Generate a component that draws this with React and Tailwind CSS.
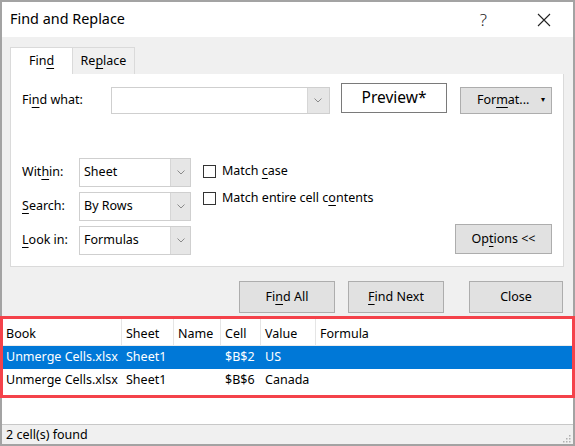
import React from 'react';

const U = ({ children }) => <span className="underline underline-offset-[3px] decoration-1">{children}</span>;

function Chevron() {
  return (
    <svg width="8" height="5" viewBox="0 0 8 5" className="text-[#8a8a8a]">
      <path d="M0.5 0.5 L4 4 L7.5 0.5" fill="none" stroke="currentColor" strokeWidth="1" />
    </svg>
  );
}

function Combo({ value, width, height, btn = 20 }) {
  return (
    <div className={`flex border border-[#cfcfcf] bg-white ${width} ${height}`}>
      <div className="flex-1 flex items-center pl-[4px] text-[12.5px]">{value}</div>
      <div className={`flex items-center justify-center bg-[#e6e6e6] border-l border-[#d6d6d6] ${btn === 22 ? 'w-[22px]' : 'w-[20px]'}`}>
        <Chevron />
      </div>
    </div>
  );
}

function Btn({ children, className = '' }) {
  return (
    <button className={`flex items-center justify-center bg-[#e1e1e1] border border-[#adadad] text-[12.5px] text-black ${className}`}>
      {children}
    </button>
  );
}

function Checkbox({ children }) {
  return (
    <div className="flex items-center gap-[6px] h-[22px] text-[12.5px]">
      <div className="w-[13px] h-[13px] border border-[#333] bg-white" />
      <span>{children}</span>
    </div>
  );
}

const cols = [
  { label: 'Book', w: 'w-[120px]' },
  { label: 'Sheet', w: 'w-[52px]' },
  { label: 'Name', w: 'w-[47px]' },
  { label: 'Cell', w: 'w-[40px]' },
  { label: 'Value', w: 'w-[55px]' },
  { label: 'Formula', w: 'flex-1' },
];

const rows = [
  ['Unmerge Cells.xlsx', 'Sheet1', '', '$B$2', 'US', ''],
  ['Unmerge Cells.xlsx', 'Sheet1', '', '$B$6', 'Canada', ''],
];

export default function App() {
  return (
    <div
      className="w-[575px] h-[446px] border-2 border-[#a3a3a3] flex flex-col bg-[#f0f0f0] text-black select-none"
      style={{ fontFamily: '"Noto Sans", "Open Sans", sans-serif' }}
    >
      {/* title bar */}
      <div className="h-[35px] bg-white flex items-center pl-[8px]">
        <span className="text-[14.4px] mt-[-1px]">Find and Replace</span>
        <span className="ml-auto text-[17px] font-light text-[#222] mr-[50px]">?</span>
        <svg width="14" height="14" viewBox="0 0 14 14" className="mr-[22px]">
          <path d="M1 1 L13 13 M13 1 L1 13" stroke="#222" strokeWidth="1.1" fill="none" />
        </svg>
      </div>

      <div className="flex-1 flex flex-col">
        {/* tabs */}
        <div className="flex pt-[10px] pl-[8px] h-[37px]">
          <div className="w-[62px] h-[27px] bg-white border-t border-l border-[#dadada] flex items-center justify-center text-[12.5px]">
            Fin<U>d</U>
          </div>
          <div className="w-[63px] h-[27px] bg-[#f0f0f0] border-t border-x border-[#dadada] flex items-center justify-center text-[12.5px]">
            Re<U>p</U>lace
          </div>
        </div>

        {/* panel */}
        <div className="ml-[8px] mr-[9px] h-[193px] bg-white border border-[#dadada] border-t-0 flex flex-col px-[11px] pt-[13px]">
          <div className="flex items-start">
            <div className="w-[89px] h-[26px] flex items-center text-[12.5px]">
              Fi<U>n</U>d what:
            </div>
            <Combo value="" width="w-[220px]" height="h-[27px]" btn={22} />
            <div className="ml-[11px] mt-[-4px] w-[107px] h-[30px] border border-[#7a7a7a] bg-white flex items-center justify-center text-[15.5px]">
              Preview*
            </div>
            <Btn className="ml-[13px] w-[92px] h-[27px] relative">
              <span className="pr-[6px]">For<U>m</U>at...</span>
              <span className="absolute right-[6px] top-[5px] text-[8px]">▾</span>
            </Btn>
          </div>

          <div className="flex mt-[44px]">
            <div className="flex flex-col gap-[5px]">
              {[
                [<>Wit<U>h</U>in:</>, 'Sheet'],
                [<><U>S</U>earch:</>, 'By Rows'],
                [<><U>L</U>ook in:</>, 'Formulas'],
              ].map(([label, value], i) => (
                <div key={i} className="flex items-center">
                  <div className="w-[57px] text-[12.5px]">{label}</div>
                  <Combo value={value} width="w-[112px]" height="h-[29px]" />
                </div>
              ))}
            </div>
            <div className="flex flex-col ml-[12px] pt-[2px] gap-[5px]">
              <Checkbox>Match <U>c</U>ase</Checkbox>
              <Checkbox>Match entire cell c<U>o</U>ntents</Checkbox>
            </div>
            <div className="flex-1" />
            <Btn className="self-end mb-[1px] w-[97px] h-[30px]">
              Op<U>t</U>ions &lt;&lt;
            </Btn>
          </div>
        </div>

        {/* action buttons */}
        <div className="flex justify-end mt-[14px] mr-[10px] h-[32px]">
          <Btn className="w-[96px] h-[32px]">Fi<U>n</U>d All</Btn>
          <Btn className="w-[96px] h-[32px] ml-[13px] border-[#0078d7]"><U>F</U>ind Next</Btn>
          <Btn className="w-[94px] h-[32px] ml-[25px]">Close</Btn>
        </div>

        {/* results list */}
        <div className="relative mt-[3px] h-[108px] bg-white flex flex-col text-[12.5px]">
          <div className="flex h-[30px] border-b border-[#ececec]">
            {cols.map((c, i) => (
              <div key={c.label} className={`${c.w} pt-[9px] px-[4px] ${i < cols.length - 1 ? 'border-r border-[#e5e5e5]' : ''}`}>
                {c.label}
              </div>
            ))}
          </div>
          {rows.map((r, ri) => (
            <div key={ri} className={`flex h-[23px] items-center ${ri === 0 ? 'bg-[#0078d7] text-white' : ''}`}>
              {r.map((cell, ci) => (
                <div key={ci} className={`${cols[ci].w} px-[4px] whitespace-nowrap`}>{cell}</div>
              ))}
            </div>
          ))}
          <div className="absolute top-0 left-[-2px] right-[-2px] h-[82px] border-[3px] border-[#f4424a] pointer-events-none" />
        </div>

        {/* status bar */}
        <div className="h-[20px] border-t border-[#c8c8c8] flex items-center pl-[4px] pt-[2px] text-[12.5px] relative">
          2 cell(s) found
          <svg width="10" height="10" viewBox="0 0 10 10" className="absolute right-[2px] bottom-[1px]">
            <g fill="#b0b0b0">
              <rect x="8" y="2" width="1.5" height="1.5" />
              <rect x="5" y="5" width="1.5" height="1.5" />
              <rect x="8" y="5" width="1.5" height="1.5" />
              <rect x="2" y="8" width="1.5" height="1.5" />
              <rect x="5" y="8" width="1.5" height="1.5" />
              <rect x="8" y="8" width="1.5" height="1.5" />
            </g>
          </svg>
        </div>
      </div>
    </div>
  );
}
